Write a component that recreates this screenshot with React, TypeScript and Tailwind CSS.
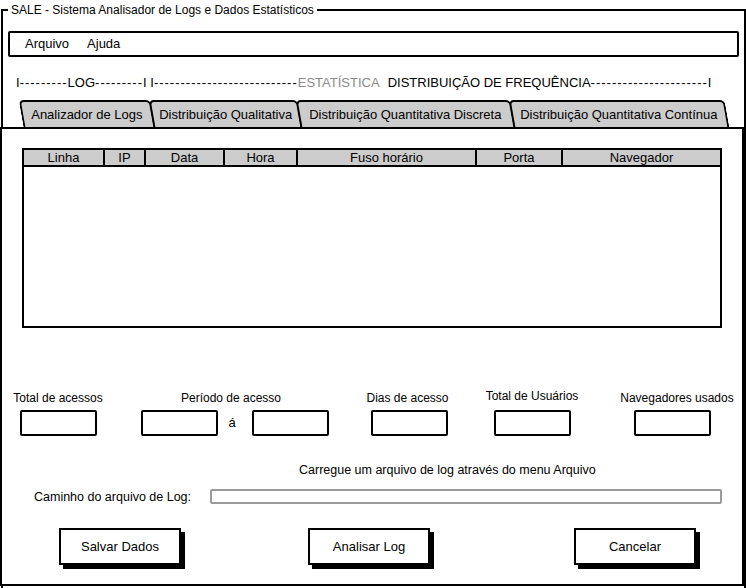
import React from "react";

const tabs = [
  { label: "Analizador de Logs", w: "w-[132px]" },
  { label: "Distribuição Qualitativa", w: "w-[149px]" },
  { label: "Distribuição Quantitativa Discreta", w: "w-[215px]" },
  { label: "Distribuição Quantitativa Contínua", w: "w-[216px]" },
];

const columns = ["Linha", "IP", "Data", "Hora", "Fuso horário", "Porta", "Navegador"];

const Box = () => (
  <div className="w-[77px] h-[26px] border-2 border-black rounded-[2px] bg-white" />
);

const Dashes = ({ n }: { n: number }) => (
  <span className="tracking-[1px]">{"-".repeat(n)}</span>
);

const App = () => {
  return (
    <div className="w-[746px] h-[588px] bg-white overflow-hidden text-black font-['Liberation_Sans',Arial,sans-serif]">
      <fieldset className="mx-[1px] mt-[3px] h-[585px] border-2 border-b-0 border-black">
        <legend className="ml-[5px] px-[3px] text-[12px] leading-[14px]">
          SALE - Sistema Analisador de Logs e Dados Estatísticos
        </legend>

        {/* menu bar */}
        <div className="mt-[14px] mx-[5px] h-[26px] border-2 border-black rounded-[2px] flex items-center gap-[18px] px-[15px] text-[13px]">
          <span>Arquivo</span>
          <span>Ajuda</span>
        </div>

        {/* section line */}
        <div className="mt-[19px] ml-[13px] h-[14px] text-[13px] leading-[14px] whitespace-nowrap">
          I<Dashes n={9} />LOG<Dashes n={9} />I I<Dashes n={27} />
          <span className="text-[#8a8a8a]">ESTATÍSTICA</span>
          <span className="ml-[8px]">DISTRIBUIÇÃO DE FREQUÊNCIA</span>
          <Dashes n={22} />I
        </div>

        {/* tabs */}
        <div className="mt-[10px] ml-[18px] h-[27px] flex">
          {tabs.map((t, i) => (
            <div
              key={t.label}
              className={`${t.w} ${i > 0 ? "-ml-[2px]" : ""} h-[27px] skew-x-[10deg] bg-[#cccccc] border-2 border-b-0 border-black rounded-t-[5px] flex items-center justify-center`}
            >
              <span className="-skew-x-[10deg] text-[13px] whitespace-nowrap">{t.label}</span>
            </div>
          ))}
        </div>

        {/* tab panel */}
        <div className="-ml-[3px] w-[744px] h-[459px] border-2 border-black bg-white">
          {/* table */}
          <div className="mt-[19px] ml-[20px] w-[700px] h-[180px] border-2 border-black">
            <div className="grid grid-cols-[81px_41px_79px_73px_179px_86px_1fr] h-[17px] bg-[#cccccc] border-b-2 border-black text-[13px] leading-[15px]">
              {columns.map((c, i) => (
                <div
                  key={c}
                  className={`text-center ${i < columns.length - 1 ? "border-r-2 border-black" : ""}`}
                >
                  {c}
                </div>
              ))}
            </div>
          </div>

          {/* stats */}
          <div className="mt-[63px] flex text-[12px] leading-[14px]">
            <div className="ml-[1px] w-[110px] flex flex-col items-center">
              <span>Total de acessos</span>
              <div className="mt-[5px]">
                <Box />
              </div>
            </div>
            <div className="ml-[22px] w-[200px] flex flex-col items-center">
              <span className="-ml-[8px]">Período de acesso</span>
              <div className="mt-[5px] flex items-center">
                <Box />
                <span className="ml-[10px] mr-[16px] text-[13px]">á</span>
                <Box />
              </div>
            </div>
            <div className="ml-[24px] w-[100px] flex flex-col items-center">
              <span className="-ml-[3px]">Dias de acesso</span>
              <div className="mt-[5px]">
                <Box />
              </div>
            </div>
            <div className="ml-[18px] w-[110px] flex flex-col items-center">
              <span className="-mt-[2px] mb-[2px]">Total de Usuários</span>
              <div className="mt-[5px]">
                <Box />
              </div>
            </div>
            <div className="ml-[15px] w-[140px] flex flex-col items-center">
              <span className="ml-[10px]">Navegadores usados</span>
              <div className="mt-[5px]">
                <Box />
              </div>
            </div>
          </div>

          <div className="mt-[27px] ml-[297px] text-[12.5px] leading-[14px] whitespace-nowrap">
            Carregue um arquivo de log através do menu Arquivo
          </div>

          <div className="mt-[12px] flex items-center h-[15px]">
            <span className="ml-[32px] w-[176px] text-[12.5px] leading-[14px] whitespace-nowrap">
              Caminho do arquivo de Log:
            </span>
            <div className="w-[512px] h-[15px] border-2 border-[#9a9a9a] rounded-[2px]" />
          </div>

          {/* buttons */}
          <div className="mt-[24px] flex text-[13px]">
            <button className="ml-[57px] w-[122px] h-[37px] border-2 border-black bg-white shadow-[4px_4px_0_#000]">
              Salvar Dados
            </button>
            <button className="ml-[127px] w-[122px] h-[37px] border-2 border-black bg-white shadow-[4px_4px_0_#000]">
              Analisar Log
            </button>
            <button className="ml-[144px] w-[122px] h-[37px] border-2 border-black bg-white shadow-[4px_4px_0_#000]">
              Cancelar
            </button>
          </div>
        </div>
      </fieldset>
    </div>
  );
};

export default App;
